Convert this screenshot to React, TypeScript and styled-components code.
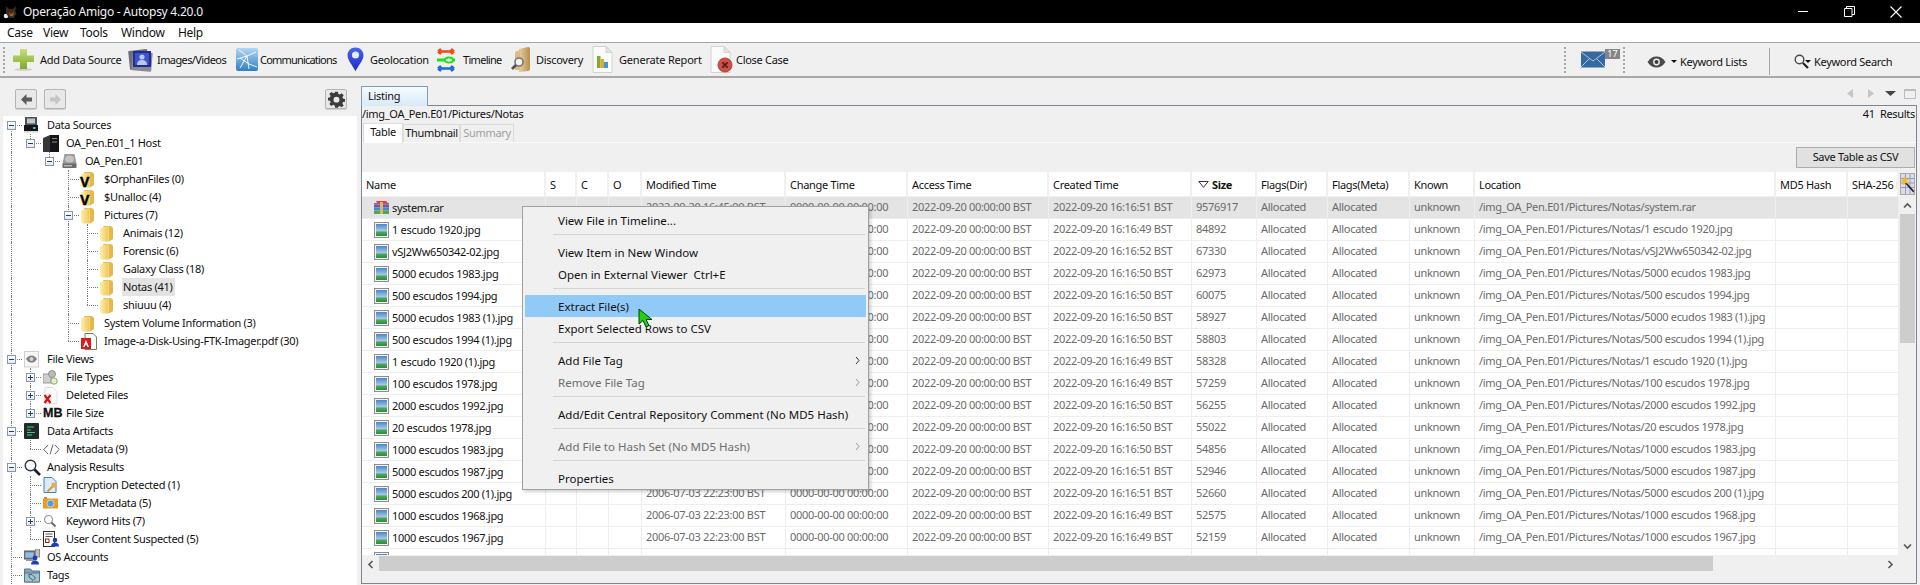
import React from "react";
import styled, { createGlobalStyle } from "styled-components";

const FONT = `"Noto Sans", "Open Sans", Arial, sans-serif`;

const Global = createGlobalStyle`
  html, body { margin: 0; padding: 0; background: #f0f0f0; overflow: hidden; }
  body { font-family: ${FONT}; font-size: 11px; letter-spacing: -0.3px; color: #111; }
  * { box-sizing: border-box; }
`;

const Page = styled.div`
  position: relative;
  width: 1920px;
  height: 585px;
  overflow: hidden;
  display: flex;
  flex-direction: column;
  background: #f0f0f0;
`;

const TitleBar = styled.div`
  height: 23px;
  background: #000;
  color: #f2f2f2;
  display: flex;
  align-items: center;
  padding-left: 3px;
  font-size: 12px;
  letter-spacing: -0.25px;
  flex: none;
`;
const TitleText = styled.span`
  margin-left: 5px;
`;
const WindowControls = styled.div`
  margin-left: auto;
  display: flex;
  align-items: center;
  padding-right: 18px;
  gap: 35px;
`;
const MenuBar = styled.div`
  height: 20px;
  background: #fff;
  border-bottom: 1px solid #a5a5a5;
  display: flex;
  align-items: center;
  flex: none;
  font-size: 12px;
`;
const MenuLabel = styled.span<{ $w: number }>`
  width: ${(p) => p.$w}px;
  padding-left: 7px;
  flex: none;
`;
const ToolBar = styled.div`
  height: 35px;
  background: #f0f0f0;
  border-bottom: 2px solid #a8a8a8;
  display: flex;
  align-items: center;
  flex: none;
  padding-left: 3px;
`;
const Grip = styled.div`
  width: 3px;
  height: 26px;
  border-left: 2px dotted #a8a8a8;
  flex: none;
`;
const ToolButton = styled.div<{ $w: number; $slot: number }>`
  width: ${(p) => p.$w}px;
  display: grid;
  grid-template-columns: ${(p) => p.$slot}px auto;
  align-items: center;
  flex: none;
  white-space: nowrap;
`;
const ToolIcon = styled.div`
  display: flex;
  align-items: center;
  height: 30px;
`;
const ToolLabel = styled.span<{ $ls: number }>`
  letter-spacing: ${(p) => p.$ls}px;
`;
const ToolLead = styled.div`
  width: 7px;
  flex: none;
`;
const ToolRight = styled.div`
  margin-left: auto;
  display: flex;
  align-items: center;
  height: 33px;
  flex: none;
`;
const MailBox = styled.div`
  position: relative;
  width: 56px;
  height: 26px;
  display: flex;
  align-items: center;
  padding-left: 14px;
  flex: none;
`;
const MailBadge = styled.span`
  position: absolute;
  left: 38px;
  top: 2px;
  width: 15px;
  height: 10px;
  background: #858585;
  color: #fff;
  font-size: 9px;
  letter-spacing: 0;
  line-height: 10px;
  text-align: center;
`;
const KeywordLists = styled.div`
  width: 144px;
  height: 27px;
  display: flex;
  align-items: center;
  padding-left: 21px;
  border-right: 1px solid #a8a8a8;
  flex: none;
  margin-top: 4px;
  white-space: nowrap;
`;
const KeywordSearch = styled.div`
  width: 150px;
  display: flex;
  align-items: center;
  padding-left: 24px;
  margin-top: 4px;
  flex: none;
  white-space: nowrap;
`;
const Caret = styled.span<{ $tight?: boolean }>`
  width: 0;
  height: 0;
  border-left: 3px solid transparent;
  border-right: 3px solid transparent;
  border-top: 3px solid #111;
  margin: ${(p) => (p.$tight ? "0 3px 0 -4px" : "0 3px 0 5px")};
  flex: none;
`;

const Body = styled.div`
  flex: 1;
  display: flex;
  min-height: 0;
`;
const LeftPane = styled.div`
  width: 358px;
  padding-left: 3px;
  flex: none;
  display: flex;
  flex-direction: column;
`;
const NavBar = styled.div`
  height: 38px;
  flex: none;
  display: flex;
  align-items: flex-start;
  padding: 11px 11px 0 12px;
  gap: 7px;
`;
const NavButton = styled.div<{ $right?: boolean }>`
  width: 22px;
  height: 20px;
  background: #e8e8e8;
  border: 1px solid #b4b4b4;
  border-radius: 2px;
  display: flex;
  align-items: center;
  justify-content: center;
  margin-left: ${(p) => (p.$right ? "auto" : "0")};
  box-shadow: 0 1px 0 #cfcfcf;
`;
const Tree = styled.div`
  flex: 1;
  width: 354px;
  background: #fff;
  overflow: hidden;
`;
const TreeRow = styled.div`
  height: 18px;
  display: flex;
  align-items: stretch;
  white-space: nowrap;
`;
const Guide = styled.div<{ $on: boolean }>`
  width: 19px;
  flex: none;
  position: relative;
  &::before {
    content: "";
    display: ${(p) => (p.$on ? "block" : "none")};
    position: absolute;
    left: 8px;
    top: 0;
    bottom: 0;
    border-left: 1px dotted #7c7c7c;
  }
`;
const Connector = styled.div<{ $kind: string }>`
  width: 19px;
  flex: none;
  position: relative;
  &::before {
    content: "";
    position: absolute;
    left: 8px;
    top: ${(p) => (p.$kind === "first" ? "9px" : "0")};
    bottom: ${(p) => (p.$kind === "last" ? "9px" : "0")};
    border-left: 1px dotted #7c7c7c;
  }
  &::after {
    content: "";
    position: absolute;
    left: 8px;
    top: 9px;
    width: 11px;
    border-top: 1px dotted #7c7c7c;
  }
`;
const Expander = styled.div`
  position: absolute;
  z-index: 1;
  left: 4px;
  top: 5px;
  width: 9px;
  height: 9px;
  background: linear-gradient(#fff, #e4e8ee);
  border: 1px solid #8a97a8;
  display: flex;
  align-items: center;
  justify-content: center;
`;
const IconSlot = styled.div`
  position: relative;
  width: 24px;
  padding-left: 2px;
  flex: none;
  display: flex;
  align-items: center;
`;
const VMark = styled.span`
  position: absolute;
  left: 1px;
  top: 7px;
  font-family: "Liberation Sans", Arial, sans-serif;
  font-size: 14px;
  font-weight: 900;
  line-height: 11px;
  letter-spacing: 0;
  color: #000;
  -webkit-text-stroke: 0.5px #000;
`;
const MbMark = styled.span`
  font-family: "Liberation Sans", Arial, sans-serif;
  font-size: 12.5px;
  font-weight: 700;
  letter-spacing: 0;
  color: #111;
  -webkit-text-stroke: 0.3px #111;
`;
const TreeLabel = styled.span<{ $sel?: boolean }>`
  line-height: 18px;
  padding: 0 3px 0 1px;
  background: ${(p) => (p.$sel ? "#e3e3e3" : "transparent")};
`;

const RightPane = styled.div`
  width: 1556px;
  margin-left: 3px;
  flex: none;
  display: flex;
  flex-direction: column;
`;
const TabStrip = styled.div`
  height: 27px;
  flex: none;
  display: flex;
  align-items: flex-end;
  position: relative;
`;
const ListingTab = styled.div`
  width: 67px;
  height: 20px;
  margin-bottom: -1px;
  position: relative;
  z-index: 1;
  border: 1px solid #7f9db9;
  border-bottom: none;
  background: linear-gradient(#f6fafe, #d9e9f8);
  padding-left: 6px;
  line-height: 18px;
`;
const TabControls = styled.div`
  margin-left: auto;
  align-self: flex-start;
  padding-top: 9px;
  padding-right: 1px;
  display: flex;
  align-items: center;
  gap: 7px;
`;
const ContentBox = styled.div`
  height: 479px;
  flex: none;
  border: 1px solid #7d8793;
  display: flex;
  flex-direction: column;
`;
const PathRow = styled.div`
  height: 16px;
  flex: none;
  display: flex;
  justify-content: space-between;
  line-height: 15px;
  padding-right: 1px;
`;
const SubTabs = styled.div`
  height: 21px;
  flex: none;
  display: flex;
  align-items: flex-end;
  border-bottom: 1px solid #fafafa;
  padding-left: 1px;
`;
const SubTab = styled.div<{ $w: number; $active?: boolean; $disabled?: boolean }>`
  width: ${(p) => p.$w}px;
  height: ${(p) => (p.$active ? 20 : 18)}px;
  background: ${(p) => (p.$active ? "#fff" : "#f0f0f0")};
  border: 1px solid #dcdcdc;
  border-bottom: none;
  text-align: center;
  line-height: 15px;
  color: ${(p) => (p.$disabled ? "#a0a0a0" : "#111")};
  margin-bottom: ${(p) => (p.$active ? "-1px" : "0")};
`;
const ActionRow = styled.div`
  height: 29px;
  flex: none;
  display: flex;
  justify-content: flex-end;
  padding: 4px 1px 0 0;
`;
const SaveButton = styled.div`
  width: 119px;
  height: 21px;
  background: #e1e1e1;
  border: 1px solid #adadad;
  text-align: center;
  line-height: 18px;
`;
const TableWrap = styled.div`
  height: 383px;
  flex: none;
  display: flex;
`;
const TableArea = styled.div`
  width: 1537px;
  flex: none;
  overflow: hidden;
  background: #fff;
`;
const HeaderRow = styled.div`
  height: 25px;
  display: flex;
  border-bottom: 1px solid #f0f0f0;
`;
const HeadCell = styled.div<{ $w: number }>`
  width: ${(p) => p.$w}px;
  flex: none;
  padding-left: 4px;
  border-right: 2px solid #f0f0f0;
  display: flex;
  align-items: center;
  overflow: hidden;
  white-space: nowrap;
  color: #111;
`;
const SizeHead = styled.b`
  font-weight: 700;
  margin-left: 3px;
`;
const DataRow = styled.div<{ $sel?: boolean }>`
  height: 22px;
  display: flex;
  background: ${(p) => (p.$sel ? "#e4e4e4" : "#fff")};
  border-bottom: 1px solid #eeeeee;
`;
const Cell = styled.div<{ $w: number }>`
  width: ${(p) => p.$w}px;
  flex: none;
  padding-left: 4px;
  border-right: 1px solid #eeeeee;
  overflow: hidden;
  white-space: nowrap;
  line-height: 20px;
  color: #6a6a6a;
`;
const NameCell = styled(Cell)`
  color: #111;
  padding-left: 12px;
  display: flex;
  align-items: center;
  gap: 3px;
`;
const VScroll = styled.div`
  width: 17px;
  flex: none;
  display: flex;
  flex-direction: column;
  align-items: center;
`;
const WandButton = styled.div`
  width: 15px;
  height: 22px;
  margin-top: 1px;
  margin-bottom: 2px;
  border: 1px solid #a8a8a8;
  background: #dcdce8;
  display: flex;
  align-items: center;
  justify-content: center;
  flex: none;
`;
const ScrollArrow = styled.div`
  width: 17px;
  height: 17px;
  flex: none;
  display: flex;
  align-items: center;
  justify-content: center;
`;
const VThumb = styled.div`
  width: 15px;
  height: 129px;
  flex: none;
  background: #cdcdcd;
`;
const Grow = styled.div`
  flex: 1;
`;
const HScroll = styled.div`
  height: 15px;
  margin-top: 1px;
  width: 1537px;
  flex: none;
  display: flex;
  align-items: stretch;
`;
const HThumb = styled.div`
  width: 1334px;
  flex: none;
  background: #cdcdcd;
`;

const ContextMenu = styled.div`
  position: absolute;
  left: 522px;
  top: 206px;
  width: 347px;
  height: 284px;
  background: #f0f0f0;
  border: 1px solid #a0a0a0;
  padding-top: 2px;
  box-shadow: 2px 2px 3px rgba(0, 0, 0, 0.18);
  z-index: 5;
  font-size: 11.5px;
  letter-spacing: 0;
`;
const MenuItem = styled.div<{ $hot?: boolean; $disabled?: boolean }>`
  height: 22px;
  margin: 0 2px;
  padding: 0 6px 0 33px;
  display: flex;
  align-items: center;
  justify-content: space-between;
  background: ${(p) => (p.$hot ? "#91c9f7" : "transparent")};
  color: ${(p) => (p.$disabled ? "#6d6d6d" : "#111")};
`;
const MenuSep = styled.div`
  height: 10px;
  padding: 3px 3px 0 30px;
  &::before {
    content: "";
    display: block;
    height: 1px;
    background: #d4d4d4;
  }
`;
const Cursor = styled.svg`
  position: absolute;
  left: 638px;
  top: 308px;
  z-index: 6;
`;

/* ---------- icons ---------- */
const AppIcon = () => (
  <svg width="15" height="16" viewBox="0 0 15 16">
    <circle cx="3" cy="12" r="2.3" fill="#dfe8ee" />
    <path d="M3 2l3 3h4l3-3-.6 5 1 3-3 4H6L3 9z" fill="#3b2a20" />
    <path d="M6 8l2 2 3-2-1 4H7z" fill="#a2581e" />
  </svg>
);
const Minimize = () => (
  <svg width="11" height="11" viewBox="0 0 11 11"><path d="M0 5.5h10" stroke="#fff" /></svg>
);
const Restore = () => (
  <svg width="11" height="11" viewBox="0 0 11 11" fill="none" stroke="#fff">
    <path d="M.5 2.5h7.5v8H.5zM2.5 2.5v-2h8v8H8" />
  </svg>
);
const CloseX = () => (
  <svg width="12" height="12" viewBox="0 0 12 12" stroke="#fff" strokeWidth="1.1"><path d="M.5.5l11 11M11.500.5l-11 11" /></svg>
);
const PlusIcon = () => (
  <svg width="21" height="24" viewBox="0 0 21 24">
    <defs><linearGradient id="plusG" x1="0" y1="0" x2="0" y2="1"><stop offset="0" stopColor="#c8de7c" /><stop offset="1" stopColor="#80a92c" /></linearGradient></defs>
    <ellipse cx="10.5" cy="21.5" rx="9" ry="1.4" fill="#d0d0d0" />
    <path d="M7 1h7v6.5h7v6.5h-7v7H7v-7H0V7.5h7z" fill="url(#plusG)" />
  </svg>
);
const ImagesIcon = () => (
  <svg width="25" height="25" viewBox="0 0 25 25">
    <rect x="1" y="3" width="19" height="19" rx="1" fill="#6f6f78" transform="rotate(-6 10 12)" />
    <rect x="4" y="5" width="20" height="19" rx="1" fill="#8a8a92" transform="rotate(5 14 14)" />
    <rect x="5" y="4" width="18" height="16" fill="#1c2e98" />
    <rect x="7" y="6" width="14" height="12" fill="#3f52c6" />
    <circle cx="14" cy="10" r="2.6" fill="#b9c6f2" />
    <path d="M9 18c0-4 2.5-5 5-5s5 1 5 5z" fill="#b9c6f2" />
  </svg>
);
const CommIcon = () => (
  <svg width="25" height="25" viewBox="0 0 25 25">
    <defs><linearGradient id="commG" x1="0" y1="0" x2="0" y2="1"><stop offset="0" stopColor="#b4d6f2" /><stop offset="1" stopColor="#2f7fc4" /></linearGradient></defs>
    <rect x="1" y="1" width="22" height="23" rx="2" fill="url(#commG)" />
    <g stroke="#fff" strokeWidth="1" fill="none" opacity=".9">
      <path d="M12 9L4 3M12 9l9-4M12 9l-7 12M12 9l2 13M12 9L2 12M14 17l8 3M14 17l-9-6" />
    </g>
  </svg>
);
const PinIcon = () => (
  <svg width="17" height="25" viewBox="0 0 17 25">
    <defs><linearGradient id="pinG" x1="0" y1="0" x2="0" y2="1"><stop offset="0" stopColor="#4a64f0" /><stop offset="1" stopColor="#1a2ec0" /></linearGradient></defs>
    <path d="M8.5 0.5C3.8.5.5 4 .5 8.3c0 5 5 10 8 16 3-6 8-11 8-16C16.500 4 13.200.5 8.500.5z" fill="url(#pinG)" />
    <circle cx="8.500" cy="8" r="3.500" fill="#e8ecf8" />
  </svg>
);
const TimelineIcon = () => (
  <svg width="22" height="24" viewBox="0 0 22 24">
    <path d="M3 3.500h16M3 3.500l3-2.500M3 3.500l3 2.500M19 3.500l-3-2.500M19 3.500l-3 2.500" stroke="#f24a14" strokeWidth="2.400" fill="none" />
    <path d="M2 12h8" stroke="#22e01a" strokeWidth="3" />
    <ellipse cx="14" cy="12" rx="4" ry="2.500" fill="#e6ffe6" stroke="#22e01a" strokeWidth="2" />
    <path d="M18 12h2" stroke="#22e01a" strokeWidth="3" />
    <path d="M3 20.500h16M3 20.500l3-2.500M3 20.500l3 2.500M19 20.500l-3-2.500M19 20.500l-3 2.500" stroke="#1a6ae0" strokeWidth="2.400" fill="none" />
  </svg>
);
const DiscoveryIcon = () => (
  <svg width="22" height="26" viewBox="0 0 22 26">
    <defs><linearGradient id="discG" x1="0" y1="0" x2="1" y2="0"><stop offset="0" stopColor="#e8cf9e" /><stop offset="1" stopColor="#b98e52" /></linearGradient></defs>
    <path d="M9 2l9-2c2 0 2 1 2 2v20c0 1-1 2-2 2l-9 1z" fill="url(#discG)" />
    <path d="M5 5l5-2v20H5z" fill="#d9bc86" />
    <circle cx="9" cy="15" r="4" fill="#f2f2f0" stroke="#777" strokeWidth="1.600" />
    <path d="M6 18l-4 4" stroke="#555" strokeWidth="2.800" />
  </svg>
);
const PageBase = () => <path d="M1 .5h13l6 6v20H1z" fill="#fbfbfb" stroke="#d2d2d2" />;
const ReportIcon = () => (
  <svg width="21" height="27" viewBox="0 0 21 27">
    <PageBase />
    <path d="M14 .5v6h6z" fill="#e4e4e4" stroke="#d2d2d2" />
    <rect x="5" y="10" width="3.500" height="12" fill="#80ad2e" />
    <rect x="8.500" y="13" width="3.500" height="9" fill="#e0a83a" />
    <rect x="12" y="16" width="4" height="6" fill="#3a9bd8" />
  </svg>
);
const CloseCaseIcon = () => (
  <svg width="23" height="27" viewBox="0 0 23 27">
    <PageBase />
    <path d="M14 .5v6h6z" fill="#e4e4e4" stroke="#d2d2d2" />
    <circle cx="15" cy="19" r="7" fill="#cf4f47" stroke="#b0413a" />
    <path d="M12.300 16.300l5.400 5.400M17.700 16.300l-5.400 5.400" stroke="#5a1c18" strokeWidth="1.800" />
  </svg>
);
const MailIcon = () => (
  <svg width="25" height="17" viewBox="0 0 25 17">
    <rect width="24" height="16" y=".5" fill="#35699f" />
    <path d="M0 1l12 9L24 1M0 16l8-8M24 16l-8-8" stroke="#a9c6e2" fill="none" />
  </svg>
);
const EyeIcon = () => (
  <svg width="19" height="12" viewBox="0 0 19 12">
    <path d="M.5 6C3 2 6 .5 9.500.5S16 2 18.500 6C16 10 13 11.500 9.500 11.500S3 10 .5 6z" fill="#4b4b4b" />
    <circle cx="9.500" cy="6" r="3.400" fill="#f0f0f0" />
    <circle cx="9.500" cy="6" r="2" fill="#3c3c3c" />
  </svg>
);
const SearchToolIcon = () => (
  <svg width="15" height="15" viewBox="0 0 15 15">
    <circle cx="5.500" cy="5.500" r="4.300" fill="#f4f4f4" stroke="#4a4a4a" strokeWidth="1.400" />
    <path d="M9 9l5 5" stroke="#222" strokeWidth="2.200" />
  </svg>
);
const ArrowIcon = ({ dir, color }: { dir: "l" | "r"; color: string }) => (
  <svg width="13" height="13" viewBox="0 0 13 13" style={{ transform: dir === "r" ? "scaleX(-1)" : undefined }}>
    <path d="M6.500 1L1 6.500 6.500 12V8.500H12v-4H6.500z" fill={color} />
  </svg>
);
const GearIcon = () => (
  <svg width="17" height="17" viewBox="0 0 24 24">
    <path fill="#3c3c3c" fillRule="evenodd" d="M10 1h4l.6 3.200 2 .8L19.300 3.200l2.800 2.800-1.800 2.700.8 2 3.200.6v3.700l-3.200.6-.8 2 1.800 2.700-2.800 2.800-2.700-1.800-2 .8L14 23.500h-4l-.6-3.200-2-.8-2.700 1.800L1.900 18.500l1.800-2.700-.8-2L-.3 13.200V9.500l3.200-.6.800-2L1.900 4.200 4.700 1.400l2.700 1.800 2-.8zM12 8a4.200 4.200 0 100 8.400A4.200 4.200 0 0012 8z" />
  </svg>
);
const DriveIcon = () => (
  <svg width="14" height="16" viewBox="0 0 14 16">
    <rect x="1" y="0" width="12" height="9" fill="#4a5058" />
    <rect x="3" y="1.500" width="8" height="5" fill="#bfc6cc" />
    <rect x="0" y="8" width="14" height="6" fill="#14161a" />
    <rect x="9" y="10" width="2.500" height="2" fill="#3fc0c0" />
    <rect x="0" y="14" width="14" height="1.500" fill="#d4d4d4" />
  </svg>
);
const HostIcon = () => (
  <svg width="17" height="17" viewBox="0 0 17 17">
    <path d="M0 3l7-3v17H0z" fill="#38383a" />
    <path d="M7 0h9v17H7z" fill="#151517" />
    <path d="M9 3.500h5M9 7h5" stroke="#8d8d8d" />
  </svg>
);
const HddIcon = () => (
  <svg width="15" height="16" viewBox="0 0 15 16">
    <path d="M2.500 1h10L14.500 11H.5z" fill="#9a9a9a" />
    <ellipse cx="7.500" cy="6" rx="4.500" ry="3.500" fill="#c4c4c4" />
    <rect x=".5" y="10.500" width="14" height="4.500" fill="#6b6b6b" />
    <rect x="2" y="12" width="8" height="1.500" fill="#b8b8b8" />
  </svg>
);
const FolderIcon = () => (
  <svg width="13" height="17" viewBox="0 0 13 17">
    <defs><linearGradient id="foldG" x1="0" y1="0" x2="1" y2="0"><stop offset="0" stopColor="#fdeeae" /><stop offset="1" stopColor="#f0c95e" /></linearGradient></defs>
    <path d="M3 1h6.500L12 1.500 13 3v11l-4 2.500z" fill="#e3b850" />
    <path d="M0 3.500L8 1v15.500L2 16.500 0 15z" fill="url(#foldG)" />
    <path d="M8 1l1 1.500v14l-1 .5z" fill="#f6d670" />
  </svg>
);
const PdfIcon = () => (
  <svg width="16" height="17" viewBox="0 0 16 17">
    <path d="M4 .5h8l3.500 3.500v12.500H4z" fill="#fff" stroke="#777" />
    <rect x="0" y="5" width="10" height="11" fill="#dd1a1a" />
    <path d="M5 7L2 14h1.500L5 11l1.500 3H8z" fill="#fff" />
  </svg>
);
const EyeTile = () => (
  <svg width="15" height="17" viewBox="0 0 15 17">
    <rect x=".5" y=".5" width="14" height="15.500" fill="#f6f6f6" stroke="#cfcfcf" />
    <path d="M2 8c2-3 3.500-3.500 5.500-3.500S11 5 13 8c-2 3-3.500 3.500-5.500 3.500S4 11 2 8z" fill="#7f7f7f" />
    <circle cx="7.500" cy="8" r="2" fill="#d5d5d5" />
  </svg>
);
const FileTypesIcon = () => (
  <svg width="15" height="15" viewBox="0 0 15 15">
    <rect x="0" y="4" width="8" height="9" fill="#cfcfcf" stroke="#9a9a9a" />
    <circle cx="9" cy="4" r="3.500" fill="#bcbcbc" stroke="#8f8f8f" />
    <circle cx="11" cy="11" r="3.200" fill="#e6efd0" stroke="#8fa866" />
  </svg>
);
const DeletedIcon = () => (
  <svg width="15" height="17" viewBox="0 0 15 17">
    <path d="M2 .5h8l4 4v12H2z" fill="#fafafa" stroke="#e0e0e0" />
    <path d="M1.500 8l6 8M7.500 8l-6 8" stroke="#e01010" strokeWidth="2.200" />
  </svg>
);
const TerminalIcon = () => (
  <svg width="15" height="16" viewBox="0 0 15 16">
    <rect width="15" height="16" rx="1" fill="#242a2a" />
    <path d="M3 4h7M3 7h4M3 9.500h8M3 12h5" stroke="#3fd08c" strokeWidth="1.200" />
  </svg>
);
const CodeIcon = () => (
  <svg width="17" height="11" viewBox="0 0 17 11" fill="none" stroke="#666" strokeWidth="1">
    <path d="M5 1L.8 5.500 5 10M12 1l4.200 4.500L12 10M10 .5L7 10.500" />
  </svg>
);
const BigLens = () => (
  <svg width="17" height="17" viewBox="0 0 17 17">
    <circle cx="6.500" cy="6.500" r="5.300" fill="#f6f8fa" stroke="#2d3a44" strokeWidth="1.400" />
    <path d="M10.500 10.500l5.500 5.500" stroke="#1c2024" strokeWidth="2.600" />
  </svg>
);
const EncIcon = () => (
  <svg width="15" height="16" viewBox="0 0 15 16">
    <path d="M1 .5h8l4 4v11H1z" fill="#dcebfa" stroke="#3a80c8" />
    <circle cx="11" cy="8" r="2.600" fill="#e5b33c" />
    <path d="M9.500 9.500l-5 5" stroke="#d59f28" strokeWidth="2" />
  </svg>
);
const CameraIcon = () => (
  <svg width="15" height="12" viewBox="0 0 15 12">
    <rect y="1.500" width="15" height="10" fill="#ee9a1e" />
    <rect x="1" y="0" width="3" height="2" fill="#d98a18" />
    <circle cx="7.500" cy="6.500" r="3.500" fill="#4f9fd8" stroke="#b8d8ee" />
  </svg>
);
const SmallLens = () => (
  <svg width="14" height="15" viewBox="0 0 14 15">
    <circle cx="5.500" cy="5.500" r="4" fill="#fcfcfc" stroke="#9a9a9a" strokeWidth="1.200" />
    <path d="M8.500 8.500l4 4" stroke="#6a6a6a" strokeWidth="2" />
    <path d="M1 14h12" stroke="#e8e8e8" />
  </svg>
);
const UserContentIcon = () => (
  <svg width="17" height="16" viewBox="0 0 17 16">
    <rect x=".5" y=".5" width="11" height="15" fill="#fff" stroke="#333" />
    <path d="M2.500 3h7M2.500 5.500h7" stroke="#555" />
    <rect x="2.500" y="8" width="3.500" height="3.500" fill="none" stroke="#a02020" />
    <circle cx="12" cy="9" r="2.300" fill="#1b3fb8" />
    <path d="M8 15.500c0-3 2-4 4-4s4 1 4 4z" fill="#1b3fb8" />
  </svg>
);
const AccountsIcon = () => (
  <svg width="17" height="16" viewBox="0 0 17 16">
    <rect x="0" y="2" width="11" height="8" fill="#7a8a96" stroke="#555" />
    <rect x="1.500" y="3.500" width="8" height="5" fill="#8cc0e8" />
    <rect x="2" y="10" width="8" height="2" fill="#999" />
    <rect x="11.500" y="0" width="4" height="8" fill="#c0c0c0" stroke="#888" />
    <circle cx="11" cy="9" r="2.400" fill="#1b3fb8" />
    <path d="M7 15.500c0-3 2-4 4-4s4 1 4 4z" fill="#1b3fb8" />
  </svg>
);
const TagsIcon = () => (
  <svg width="16" height="15" viewBox="0 0 16 15">
    <path d="M.5 1h6l1.500 2h7.500v11H.5z" fill="#7fa6bc" stroke="#54768a" />
    <path d="M.5 5h15v9H.5z" fill="#a3c2d2" stroke="#54768a" />
    <path d="M5 6.500h3l3.500 3.500-2.500 2.500L5 9z" fill="none" stroke="#44606f" />
  </svg>
);
const JpgIcon = () => (
  <svg width="15" height="16" viewBox="0 0 15 16">
    <defs><linearGradient id="jpgG" x1="0" y1="0" x2="0" y2="1"><stop offset="0" stopColor="#4a86c8" /><stop offset=".55" stopColor="#a4c8e4" /><stop offset=".7" stopColor="#4aa65a" /><stop offset="1" stopColor="#2d8a3c" /></linearGradient></defs>
    <rect x=".5" y=".5" width="14" height="15" fill="#f4f4f4" stroke="#8d8d8d" />
    <rect x="2" y="2" width="11" height="12" fill="url(#jpgG)" />
  </svg>
);
const RarIcon = () => (
  <svg width="15" height="13" viewBox="0 0 15 13">
    <path d="M2 0h10l2 2H3z" fill="#d8404a" />
    <rect x="0" y="2" width="15" height="1.500" fill="#c8506a" />
    <rect x="0" y="3.500" width="15" height="3" fill="#6a58b8" />
    <rect x="0" y="6.500" width="15" height="3" fill="#4a88c8" />
    <rect x="0" y="9.500" width="15" height="3.500" fill="#4aa858" />
    <rect x="6" y="1" width="3" height="12" fill="#d8b860" />
  </svg>
);
const Wand = () => (
  <svg width="13" height="20" viewBox="0 0 13 20">
    <path d="M0 4.500h13M0 9h13M0 13.500h13M4.500 0v20M9 0v20" stroke="#9a9ac4" />
    <path d="M4 8l9 10" stroke="#222" strokeWidth="1.800" />
    <path d="M4 2l1 3.500L8.500 4.500 6 7l2 3-3.500-1L2 11.500 2 8-1 6.500 2 5.500z" fill="#f0c020" />
  </svg>
);
const Chevron = ({ d }: { d: string }) => (
  <svg width="9" height="7" viewBox="0 0 9 7"><path d={d} stroke="#555" strokeWidth="1.600" fill="none" /></svg>
);
const ChevronV = ({ d }: { d: string }) => (
  <svg width="7" height="9" viewBox="0 0 7 9"><path d={d} stroke="#555" strokeWidth="1.600" fill="none" /></svg>
);
const Sub = ({ c }: { c: string }) => (
  <svg width="5" height="9" viewBox="0 0 5 9"><path d="M1 1l3 3.500L1 8" stroke={c} fill="none" /></svg>
);
const Tri = ({ d, c }: { d: string; c: string }) => (
  <svg width="13" height="13" viewBox="0 0 13 13"><path d={d} fill={c} /></svg>
);

/* ---------- data ---------- */
const tools = [
  { w: 115, slot: 27, ls: -0.3, label: "Add Data Source", icon: <PlusIcon /> },
  { w: 107, slot: 29, ls: -0.6, label: "Images/Videos", icon: <ImagesIcon /> },
  { w: 112, slot: 25, ls: -0.8, label: "Communications", icon: <CommIcon /> },
  { w: 88, slot: 23, ls: -0.3, label: "Geolocation", icon: <PinIcon /> },
  { w: 75, slot: 28, ls: -0.7, label: "Timeline", icon: <TimelineIcon /> },
  { w: 82, slot: 26, ls: -0.3, label: "Discovery", icon: <DiscoveryIcon /> },
  { w: 118, slot: 27, ls: -0.2, label: "Generate Report", icon: <ReportIcon /> },
  { w: 90, slot: 26, ls: -0.3, label: "Close Case", icon: <CloseCaseIcon /> },
];

type Node = { g: number[]; kind: string; exp?: "-" | "+"; icon: React.ReactNode; label: string; sel?: boolean };
const folder = <FolderIcon />;
const vFolder = (<><FolderIcon /><VMark>V</VMark></>);
const treeNodes: Node[] = [
  { g: [], kind: "first", exp: "-", icon: <DriveIcon />, label: "Data Sources" },
  { g: [1], kind: "last", exp: "-", icon: <HostIcon />, label: "OA_Pen.E01_1 Host" },
  { g: [1, 0], kind: "last", exp: "-", icon: <HddIcon />, label: "OA_Pen.E01" },
  { g: [1, 0, 0], kind: "mid", icon: vFolder, label: "$OrphanFiles (0)" },
  { g: [1, 0, 0], kind: "mid", icon: vFolder, label: "$Unalloc (4)" },
  { g: [1, 0, 0], kind: "mid", exp: "-", icon: folder, label: "Pictures (7)" },
  { g: [1, 0, 0, 1], kind: "mid", icon: folder, label: "Animais (12)" },
  { g: [1, 0, 0, 1], kind: "mid", icon: folder, label: "Forensic (6)" },
  { g: [1, 0, 0, 1], kind: "mid", icon: folder, label: "Galaxy Class (18)" },
  { g: [1, 0, 0, 1], kind: "mid", icon: folder, label: "Notas (41)", sel: true },
  { g: [1, 0, 0, 1], kind: "last", icon: folder, label: "shiuuu (4)" },
  { g: [1, 0, 0], kind: "mid", icon: folder, label: "System Volume Information (3)" },
  { g: [1, 0, 0], kind: "last", icon: <PdfIcon />, label: "Image-a-Disk-Using-FTK-Imager.pdf (30)" },
  { g: [], kind: "mid", exp: "-", icon: <EyeTile />, label: "File Views" },
  { g: [1], kind: "mid", exp: "+", icon: <FileTypesIcon />, label: "File Types" },
  { g: [1], kind: "mid", exp: "+", icon: <DeletedIcon />, label: "Deleted Files" },
  { g: [1], kind: "last", exp: "+", icon: <MbMark>MB</MbMark>, label: "File Size" },
  { g: [], kind: "mid", exp: "-", icon: <TerminalIcon />, label: "Data Artifacts" },
  { g: [1], kind: "last", icon: <CodeIcon />, label: "Metadata (9)" },
  { g: [], kind: "mid", exp: "-", icon: <BigLens />, label: "Analysis Results" },
  { g: [1], kind: "mid", icon: <EncIcon />, label: "Encryption Detected (1)" },
  { g: [1], kind: "mid", icon: <CameraIcon />, label: "EXIF Metadata (5)" },
  { g: [1], kind: "mid", exp: "+", icon: <SmallLens />, label: "Keyword Hits (7)" },
  { g: [1], kind: "last", icon: <UserContentIcon />, label: "User Content Suspected (5)" },
  { g: [], kind: "mid", icon: <AccountsIcon />, label: "OS Accounts" },
  { g: [], kind: "mid", icon: <TagsIcon />, label: "Tags" },
];

const cols = [
  { k: "Name", w: 184 }, { k: "S", w: 31 }, { k: "C", w: 32 }, { k: "O", w: 33 },
  { k: "Modified Time", w: 144 }, { k: "Change Time", w: 122 }, { k: "Access Time", w: 141 },
  { k: "Created Time", w: 143 }, { k: "Size", w: 65 }, { k: "Flags(Dir)", w: 71 },
  { k: "Flags(Meta)", w: 82 }, { k: "Known", w: 65 }, { k: "Location", w: 301 },
  { k: "MD5 Hash", w: 72 }, { k: "SHA-256 Hash", w: 51 },
];

const files: [string, string, string, string][] = [
  ["system.rar", "2022-09-20 16:45:00 BST", "16:51", "9576917"],
  ["1 escudo 1920.jpg", "2006-07-03 22:23:00 BST", "16:49", "84892"],
  ["vSJ2Ww650342-02.jpg", "2006-07-03 22:23:00 BST", "16:52", "67330"],
  ["5000 ecudos 1983.jpg", "2006-07-03 22:23:00 BST", "16:50", "62973"],
  ["500 escudos 1994.jpg", "2006-07-03 22:23:00 BST", "16:50", "60075"],
  ["5000 ecudos 1983 (1).jpg", "2006-07-03 22:23:00 BST", "16:50", "58927"],
  ["500 escudos 1994 (1).jpg", "2006-07-03 22:23:00 BST", "16:50", "58803"],
  ["1 escudo 1920 (1).jpg", "2006-07-03 22:23:00 BST", "16:49", "58328"],
  ["100 escudos 1978.jpg", "2006-07-03 22:23:00 BST", "16:49", "57259"],
  ["2000 escudos 1992.jpg", "2006-07-03 22:23:00 BST", "16:50", "56255"],
  ["20 escudos 1978.jpg", "2006-07-03 22:23:00 BST", "16:50", "55022"],
  ["1000 escudos 1983.jpg", "2006-07-03 22:23:00 BST", "16:50", "54856"],
  ["5000 escudos 1987.jpg", "2006-07-03 22:23:00 BST", "16:51", "52946"],
  ["5000 escudos 200 (1).jpg", "2006-07-03 22:23:00 BST", "16:51", "52660"],
  ["1000 escudos 1968.jpg", "2006-07-03 22:23:00 BST", "16:49", "52575"],
  ["1000 escudos 1967.jpg", "2006-07-03 22:23:00 BST", "16:49", "52159"],
  ["1000 escudos 1969.jpg", "2006-07-03 22:23:00 BST", "16:49", "51984"],
];

const w = (k: string) => cols.find((c) => c.k === k)!.w;

export default function App() {
  return (
    <Page>
      <Global />
      <TitleBar>
        <AppIcon />
        <TitleText>Operação Amigo - Autopsy 4.20.0</TitleText>
        <WindowControls>
          <Minimize />
          <Restore />
          <CloseX />
        </WindowControls>
      </TitleBar>
      <MenuBar>
        <MenuLabel $w={36}>Case</MenuLabel>
        <MenuLabel $w={37}>View</MenuLabel>
        <MenuLabel $w={41}>Tools</MenuLabel>
        <MenuLabel $w={57}>Window</MenuLabel>
        <MenuLabel $w={40}>Help</MenuLabel>
      </MenuBar>
      <ToolBar>
        <Grip />
        <ToolLead />
        {tools.map((t) => (
          <ToolButton key={t.label} $w={t.w} $slot={t.slot}>
            <ToolIcon>{t.icon}</ToolIcon>
            <ToolLabel $ls={t.ls}>{t.label}</ToolLabel>
          </ToolButton>
        ))}
        <ToolRight>
          <Grip />
          <MailBox>
            <MailIcon />
            <MailBadge>17</MailBadge>
          </MailBox>
          <Grip />
          <KeywordLists>
            <EyeIcon />
            <Caret />
            <span>Keyword Lists</span>
          </KeywordLists>
          <KeywordSearch>
            <SearchToolIcon />
            <Caret $tight />
            <span>Keyword Search</span>
          </KeywordSearch>
        </ToolRight>
      </ToolBar>
      <Body>
        <LeftPane>
          <NavBar>
            <NavButton><ArrowIcon dir="l" color="#5c5c5c" /></NavButton>
            <NavButton><ArrowIcon dir="r" color="#c4c4c4" /></NavButton>
            <NavButton $right><GearIcon /></NavButton>
          </NavBar>
          <Tree>
            {treeNodes.map((n) => (
              <TreeRow key={n.label}>
                {n.g.map((on, i) => (
                  <Guide key={i} $on={!!on} />
                ))}
                <Connector $kind={n.kind}>
                  {n.exp && (
                    <Expander>
                      <svg width="5" height="5" viewBox="0 0 5 5">
                        <path d={n.exp === "-" ? "M0 2.500h5" : "M0 2.500h5M2.500 0v5"} stroke="#1f3f78" />
                      </svg>
                    </Expander>
                  )}
                </Connector>
                <IconSlot>{n.icon}</IconSlot>
                <TreeLabel $sel={n.sel}>{n.label}</TreeLabel>
              </TreeRow>
            ))}
          </Tree>
        </LeftPane>
        <RightPane>
          <TabStrip>
            <ListingTab>Listing</ListingTab>
            <TabControls>
              <Tri d="M9 2v9L3 6.500z" c="#c6c6c6" />
              <Tri d="M4 2v9l6-4.500z" c="#c6c6c6" />
              <Tri d="M1 4h11L6.500 9z" c="#444" />
              <svg width="12" height="10" viewBox="0 0 12 10"><rect x=".5" y=".5" width="11" height="9" fill="none" stroke="#bdbdbd" /><path d="M.5 1.500h11" stroke="#bdbdbd" /></svg>
            </TabControls>
          </TabStrip>
          <ContentBox>
            <PathRow>
              <span>/img_OA_Pen.E01/Pictures/Notas</span>
              <span>41&nbsp;&nbsp;Results</span>
            </PathRow>
            <SubTabs>
              <SubTab $w={40} $active>Table</SubTab>
              <SubTab $w={57}>Thumbnail</SubTab>
              <SubTab $w={54} $disabled>Summary</SubTab>
            </SubTabs>
            <ActionRow>
              <SaveButton>Save Table as CSV</SaveButton>
            </ActionRow>
            <TableWrap>
              <TableArea>
                <HeaderRow>
                  {cols.map((c) => (
                    <HeadCell key={c.k} $w={c.w}>
                      {c.k === "Size" ? (
                        <>
                          <svg width="11" height="7" viewBox="0 0 11 7" style={{ marginLeft: 2 }}><path d="M.8.500h9.400L5.500 6.300z" fill="none" stroke="#333" /></svg>
                          <SizeHead>Size</SizeHead>
                        </>
                      ) : (
                        c.k
                      )}
                    </HeadCell>
                  ))}
                </HeaderRow>
                {files.map(([name, mod, created, size], i) => (
                  <DataRow key={name} $sel={i === 0}>
                    <NameCell $w={w("Name")}>
                      {i === 0 ? <RarIcon /> : <JpgIcon />}
                      <span>{name}</span>
                    </NameCell>
                    <Cell $w={w("S")} />
                    <Cell $w={w("C")} />
                    <Cell $w={w("O")} />
                    <Cell $w={w("Modified Time")}>{mod}</Cell>
                    <Cell $w={w("Change Time")}>0000-00-00 00:00:00</Cell>
                    <Cell $w={w("Access Time")}>2022-09-20 00:00:00 BST</Cell>
                    <Cell $w={w("Created Time")}>{`2022-09-20 16:${created} BST`}</Cell>
                    <Cell $w={w("Size")}>{size}</Cell>
                    <Cell $w={w("Flags(Dir)")}>Allocated</Cell>
                    <Cell $w={w("Flags(Meta)")}>Allocated</Cell>
                    <Cell $w={w("Known")}>unknown</Cell>
                    <Cell $w={w("Location")}>/img_OA_Pen.E01/Pictures/Notas/{name}</Cell>
                    <Cell $w={w("MD5 Hash")} />
                    <Cell $w={w("SHA-256 Hash")} />
                  </DataRow>
                ))}
              </TableArea>
              <VScroll>
                <WandButton><Wand /></WandButton>
                <ScrollArrow><Chevron d="M1 5.500l3.500-3.500L8 5.500" /></ScrollArrow>
                <VThumb />
                <Grow />
                <ScrollArrow><Chevron d="M1 1.500L4.500 5 8 1.500" /></ScrollArrow>
              </VScroll>
            </TableWrap>
            <HScroll>
              <ScrollArrow><ChevronV d="M5.500 1L2 4.500 5.500 8" /></ScrollArrow>
              <HThumb />
              <Grow />
              <ScrollArrow><ChevronV d="M1.500 1L5 4.500 1.500 8" /></ScrollArrow>
            </HScroll>
          </ContentBox>
        </RightPane>
      </Body>

      <ContextMenu>
        <MenuItem>View File in Timeline...</MenuItem>
        <MenuSep />
        <MenuItem>View Item in New Window</MenuItem>
        <MenuItem>Open in External Viewer&nbsp;&nbsp;Ctrl+E</MenuItem>
        <MenuSep />
        <MenuItem $hot>Extract File(s)</MenuItem>
        <MenuItem>Export Selected Rows to CSV</MenuItem>
        <MenuSep />
        <MenuItem>Add File Tag<Sub c="#333" /></MenuItem>
        <MenuItem $disabled>Remove File Tag<Sub c="#999" /></MenuItem>
        <MenuSep />
        <MenuItem>Add/Edit Central Repository Comment (No MD5 Hash)</MenuItem>
        <MenuSep />
        <MenuItem $disabled>Add File to Hash Set (No MD5 Hash)<Sub c="#999" /></MenuItem>
        <MenuSep />
        <MenuItem>Properties</MenuItem>
      </ContextMenu>
      <Cursor width="16" height="20" viewBox="0 0 16 20">
        <path d="M1 1v15l4-3.500 3 6.500 3-1.500-3-6h6z" fill="#20d010" stroke="#0a3a08" strokeWidth="1" />
      </Cursor>
    </Page>
  );
}
